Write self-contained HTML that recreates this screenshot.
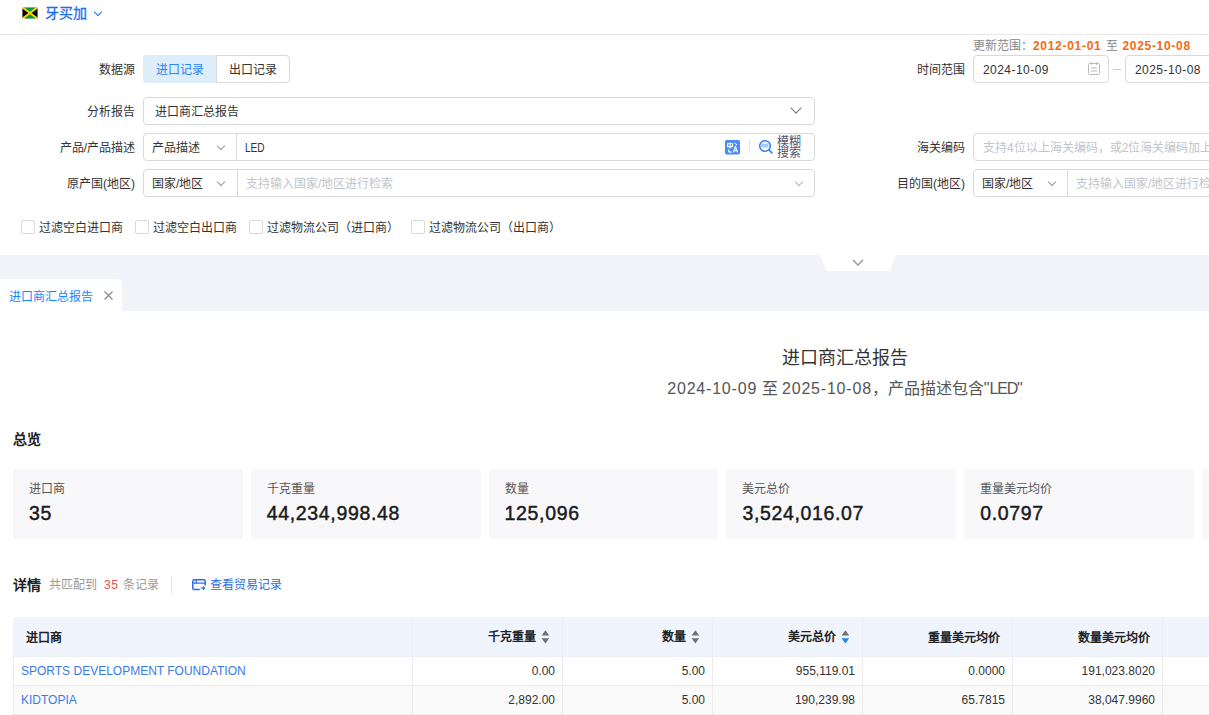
<!DOCTYPE html>
<html lang="zh-CN"><head><meta charset="utf-8">
<style>
*{box-sizing:border-box;margin:0;padding:0}
html,body{width:1209px;height:715px;overflow:hidden;background:#fff}
body{font-family:"Liberation Sans",sans-serif;font-size:12px;color:#333;position:relative}
.abs{position:absolute;white-space:nowrap}
.topbar{position:absolute;left:0;top:0;width:1209px;height:35px;border-bottom:1px solid #e8e8e8;background:#fff}
.lbl{position:absolute;width:135px;text-align:right;font-size:12px;color:#333;line-height:28px;padding-top:1px}
.inp{position:absolute;height:28px;border:1px solid #d9d9d9;border-radius:4px;background:#fff;line-height:26px;font-size:12px;color:#333}
.ph{color:#c0c4cc}
.chev{position:absolute;width:6px;height:6px;border-right:1px solid #999;border-bottom:1px solid #999;transform:rotate(45deg)}
.cb{position:absolute;width:14px;height:14px;border:1px solid #d9d9d9;border-radius:2px;background:#fff}
.band{position:absolute;left:0;top:255px;width:1209px;height:56px;background:#f2f3f8}
.card{position:absolute;top:469px;height:70px;width:229.8px;background:#f8f8fa;border-radius:4px}
.card .t{position:absolute;left:16px;top:12px;font-size:12px;color:#555;line-height:16px}
.card .v{position:absolute;left:16px;top:32.2px;font-size:19.5px;font-weight:normal;color:#1a1a1a;line-height:24px;letter-spacing:0.65px;-webkit-text-stroke:0.45px #1a1a1a}
table{position:absolute;left:13px;top:617px;width:1299px;border-collapse:collapse;table-layout:fixed}
th,td{border-right:1px solid #ebeef5;border-bottom:1px solid #ebeef5;font-size:12px;white-space:nowrap;padding:0 7px 0 8px;text-align:right}
th{height:39px;background:#f0f4fd;font-weight:bold;color:#222;padding-top:0;padding-right:12px}
td{height:29px;color:#333;padding-top:1px;border-color:#ececec}
tr.s td{background:#fafafa}
td.n{text-align:left;color:#3b79e6;border-left:1px solid #ececec;padding-left:7px}
th.n{border-left:1px solid #f0f4fd}
th.n{text-align:left;padding-left:12px}
.sort{display:inline-block;width:9px;height:14px;vertical-align:middle;margin-left:5px;position:relative;top:-1.3px}
</style></head><body>
<div class="topbar">
  <svg class="abs" style="left:22px;top:7px" width="16" height="12" viewBox="0 0 16 12">
    <rect x="0" y="0" width="16" height="12" fill="#009b3a"/>
    <path d="M0 0L8 6L0 12Z" fill="#000"/><path d="M16 0L8 6L16 12Z" fill="#000"/>
    <path d="M0 0L16 12M16 0L0 12" stroke="#fed100" stroke-width="2"/><rect x="0.25" y="0.25" width="15.5" height="11.5" fill="none" stroke="#ddd" stroke-width="0.5"/>
  </svg>
  <div class="abs" style="left:45px;top:4px;font-size:14px;line-height:18px;color:#1e6cf0;-webkit-text-stroke:0.3px #1e6cf0">牙买加</div>
  <div class="chev" style="left:95px;top:9px;border-color:#2470f0"></div>
</div>

<!-- update range -->
<div class="abs" style="left:973px;top:38px;font-size:12px;line-height:16px;color:#888">更新范围：<b style="color:#f26b12;letter-spacing:0.7px">2012-01-01</b><span style="margin:0 4px 0 5px">至</span><b style="color:#f26b12;letter-spacing:0.7px">2025-10-08</b></div>

<!-- row1 -->
<div class="lbl" style="left:0;top:55px">数据源</div>
<div class="inp" style="left:143px;top:55px;width:147px;"></div>
<div class="abs" style="left:143px;top:55px;width:74px;height:28px;background:#ddedf9;border-radius:4px 0 0 4px;color:#2a84f5;line-height:31px;text-align:center">进口记录</div>
<div class="abs" style="left:216px;top:55px;width:1px;height:28px;background:#d9d9d9"></div>
<div class="abs" style="left:217px;top:55px;width:73px;height:28px;line-height:31px;text-align:center;padding-right:2px">出口记录</div>

<div class="lbl" style="left:830px;top:55px">时间范围</div>
<div class="inp" style="left:973px;top:55px;width:136px;padding-left:9px;line-height:28px;letter-spacing:0.45px">2024-10-09</div>
<div class="abs" style="left:1113px;top:69px;width:8px;height:1px;background:#ccc"></div>
<div class="inp" style="left:1125px;top:55px;width:136px;padding-left:9px;line-height:28px;letter-spacing:0.45px">2025-10-08</div>

<!-- row2 -->
<div class="lbl" style="left:0;top:97px">分析报告</div>
<div class="inp" style="left:143px;top:97px;width:672px;padding-left:11px;padding-top:1px">进口商汇总报告</div>
<div class="chev" style="left:792px;top:104.3px;width:8px;height:8px;border-color:#777"></div>

<!-- row3 -->
<div class="lbl" style="left:0;top:133px">产品/产品描述</div>
<div class="inp" style="left:143px;top:133px;width:672px"></div>
<div class="abs" style="left:152px;top:134px;line-height:28px">产品描述</div>
<div class="chev" style="left:218px;top:142.5px"></div>
<div class="abs" style="left:236px;top:134px;width:1px;height:26px;background:#d9d9d9"></div>
<div class="abs" style="left:245px;top:134px;line-height:28px;transform:scaleX(0.84);transform-origin:0 0">LED</div>
<svg class="abs" style="left:725px;top:139.5px" width="15" height="15" viewBox="0 0 15 15"><rect x="0" y="0" width="15" height="14.6" rx="1.8" fill="#4a8af4"/>
<path d="M2.6 3.8h5v2.8h-5z M5.1 2.4v6.2" stroke="#fff" stroke-width="1.1" fill="none"/>
<path d="M3.6 9.4v1.4q0 1.3 1.3 1.3h1.8" stroke="#fff" stroke-width="1.2" fill="none"/>
<path d="M9.6 2.9l2.6 2.2" stroke="#fff" stroke-width="1.1" fill="none" stroke-dasharray="1.3 0.6"/>
<path d="M8.4 12.4L10.5 6.8L12.6 12.4M9.2 10.6h2.6" stroke="#fff" stroke-width="1.2" fill="none"/></svg>
<div class="abs" style="left:749px;top:139px;width:1px;height:14px;background:#e4e4e4"></div>
<svg class="abs" style="left:758px;top:139px" width="17" height="16" viewBox="0 0 17 16"><circle cx="7" cy="7" r="5.3" fill="none" stroke="#2a7ff5" stroke-width="1.5"/><path d="M10.9 10.9L14.5 14.5" stroke="#2a7ff5" stroke-width="1.5"/><path d="M3.2 4.6h6.5l0.8 0.8v3.2h-6.5l-0.8 -0.8z" fill="#a8c8f8"/></svg>
<svg class="abs" style="left:1087px;top:61px" width="14" height="15" viewBox="0 0 14 15"><rect x="1.5" y="2.5" width="11" height="11" rx="1" fill="none" stroke="#bbb" stroke-width="1"/><path d="M4.5 1v3M9.5 1v3M4 7h6M4 10h6" stroke="#bbb" stroke-width="1"/></svg>
<div class="abs" style="left:777px;top:136.5px;font-size:12px;line-height:11.4px;color:#55556a;white-space:normal;width:26px">模糊<br>搜索</div>

<div class="lbl" style="left:830px;top:133px">海关编码</div>
<div class="inp" style="left:973px;top:133px;width:400px;padding-left:9px;padding-top:1px"><span class="ph">支持4位以上海关编码，或2位海关编码加上产品描述</span></div>

<!-- row4 -->
<div class="lbl" style="left:0;top:169px">原产国(地区)</div>
<div class="inp" style="left:143px;top:169px;width:672px"></div>
<div class="abs" style="left:152px;top:170px;line-height:28px">国家/地区</div>
<div class="chev" style="left:218px;top:178.5px"></div>
<div class="abs" style="left:237px;top:170px;width:1px;height:26px;background:#d9d9d9"></div>
<div class="abs ph" style="left:246px;top:170px;line-height:28px">支持输入国家/地区进行检索</div>
<div class="chev" style="left:796px;top:178.5px;border-color:#b5b5b5"></div>

<div class="lbl" style="left:830px;top:169px">目的国(地区)</div>
<div class="inp" style="left:973px;top:169px;width:400px"></div>
<div class="abs" style="left:982px;top:170px;line-height:28px">国家/地区</div>
<div class="chev" style="left:1049px;top:178.5px"></div>
<div class="abs" style="left:1067px;top:170px;width:1px;height:26px;background:#d9d9d9"></div>
<div class="abs ph" style="left:1076px;top:170px;line-height:28px">支持输入国家/地区进行检索</div>

<!-- checkboxes -->
<div class="cb" style="left:21px;top:220px"></div><div class="abs" style="left:39px;top:219.5px;line-height:17px">过滤空白进口商</div>
<div class="cb" style="left:135px;top:220px"></div><div class="abs" style="left:153px;top:219.5px;line-height:17px">过滤空白出口商</div>
<div class="cb" style="left:249px;top:220px"></div><div class="abs" style="left:267px;top:219.5px;line-height:17px">过滤物流公司（进口商）</div>
<div class="cb" style="left:411px;top:220px"></div><div class="abs" style="left:429px;top:219.5px;line-height:17px">过滤物流公司（出口商）</div>

<!-- band -->
<div class="band"></div>
<svg class="abs" style="left:0;top:252.5px" width="3" height="3"><path d="M0 0V2.5H2.5A2.5 2.5 0 0 1 0 0Z" fill="#f2f3f8"/></svg>
<svg class="abs" style="left:819px;top:255px" width="78" height="17"><path d="M0.8 0H77L70.8 16H8Z" fill="#fff"/><path d="M34 5L39 10L44 5" stroke="#9292a6" stroke-width="1.4" fill="none"/></svg>
<div class="abs" style="left:0;top:279px;width:122px;height:32px;background:#fff;border-radius:0 5px 0 0"></div>
<div class="abs" style="left:9px;top:289px;line-height:16px;color:#1a85ff">进口商汇总报告</div>
<svg class="abs" style="left:103px;top:290px" width="11" height="11"><path d="M1.5 1.5L9.5 9.5M9.5 1.5L1.5 9.5" stroke="#888" stroke-width="1.1"/></svg>

<!-- report -->
<div class="abs" style="left:745px;top:346px;width:200px;text-align:center;font-size:18px;line-height:24px;color:#333">进口商汇总报告</div>
<div class="abs" style="left:645px;top:377.5px;width:400px;text-align:center;font-size:16px;line-height:22px;color:#555"><span style="letter-spacing:0.8px">2024-10-09</span> 至 <span style="letter-spacing:0.8px">2025-10-08</span>，产品描述包含"<span style="letter-spacing:-1.2px">LED</span>"</div>

<div class="abs" style="left:13px;top:430px;font-size:14px;font-weight:bold;line-height:18px;color:#222">总览</div>

<div class="card" style="left:13px"><div class="t">进口商</div><div class="v">35</div></div>
<div class="card" style="left:250.8px"><div class="t">千克重量</div><div class="v">44,234,998.48</div></div>
<div class="card" style="left:488.6px"><div class="t">数量</div><div class="v">125,096</div></div>
<div class="card" style="left:726.4px"><div class="t">美元总价</div><div class="v">3,524,016.07</div></div>
<div class="card" style="left:964.2px"><div class="t">重量美元均价</div><div class="v">0.0797</div></div>
<div class="card" style="left:1202px"><div class="t">数量美元均价</div><div class="v">28,000</div></div>

<div class="abs" style="left:13px;top:576px;font-size:14px;font-weight:bold;line-height:18px;color:#222">详情</div>
<div class="abs" style="left:49px;top:577px;font-size:12px;line-height:16px;color:#999">共匹配到<span style="color:#f04a4a;margin:0 5px 0 7px;letter-spacing:0.5px">35</span>条记录</div>
<div class="abs" style="left:171px;top:576px;width:1px;height:18px;background:#e5e5e5"></div>
<svg class="abs" style="left:192px;top:579px" width="15" height="12" viewBox="0 0 15 12"><path d="M7.8 10.6H2.2Q0.8 10.6 0.8 9.2V2.2Q0.8 0.8 2.2 0.8H11.8Q13.2 0.8 13.2 2.2V6.6" fill="none" stroke="#2b6de5" stroke-width="1.5"/><path d="M0.8 4.1H13.2M4.3 0.8V4.1" stroke="#2b6de5" stroke-width="1.3"/><path d="M8.6 9.1H11.3" stroke="#6d9bef" stroke-width="1.6"/><path d="M10.8 6.8L13.4 9.1L10.8 11.4Z" fill="#2b6de5"/></svg>
<div class="abs" style="left:210px;top:577px;font-size:12px;line-height:16px;color:#2b6de5">查看贸易记录</div>

<table>
<colgroup><col style="width:399px"><col style="width:150px"><col style="width:150px"><col style="width:150px"><col style="width:150px"><col style="width:150px"><col style="width:150px"></colgroup>
<tr><th class="n">进口商</th><th>千克重量<svg class="sort" width="9" height="14" viewBox="0 0 9 14"><path d="M0.6 5.4L4.4 0.2L8.2 5.4Z" fill="#707078"/><path d="M0.6 8.2L4.4 13.4L8.2 8.2Z" fill="#707078"/></svg></th><th>数量<svg class="sort" width="9" height="14" viewBox="0 0 9 14"><path d="M0.6 5.4L4.4 0.2L8.2 5.4Z" fill="#707078"/><path d="M0.6 8.2L4.4 13.4L8.2 8.2Z" fill="#707078"/></svg></th><th>美元总价<svg class="sort" width="9" height="14" viewBox="0 0 9 14"><path d="M0.6 5.4L4.4 0.2L8.2 5.4Z" fill="#707078"/><path d="M0.6 8.2L4.4 13.4L8.2 8.2Z" fill="#1a86f5"/></svg></th><th>重量美元均价</th><th>数量美元均价</th><th></th></tr>
<tr><td class="n">SPORTS DEVELOPMENT FOUNDATION</td><td>0.00</td><td>5.00</td><td>955,119.01</td><td>0.0000</td><td>191,023.8020</td><td></td></tr>
<tr class="s"><td class="n">KIDTOPIA</td><td>2,892.00</td><td>5.00</td><td>190,239.98</td><td>65.7815</td><td>38,047.9960</td><td></td></tr>
</table>
</body></html>
